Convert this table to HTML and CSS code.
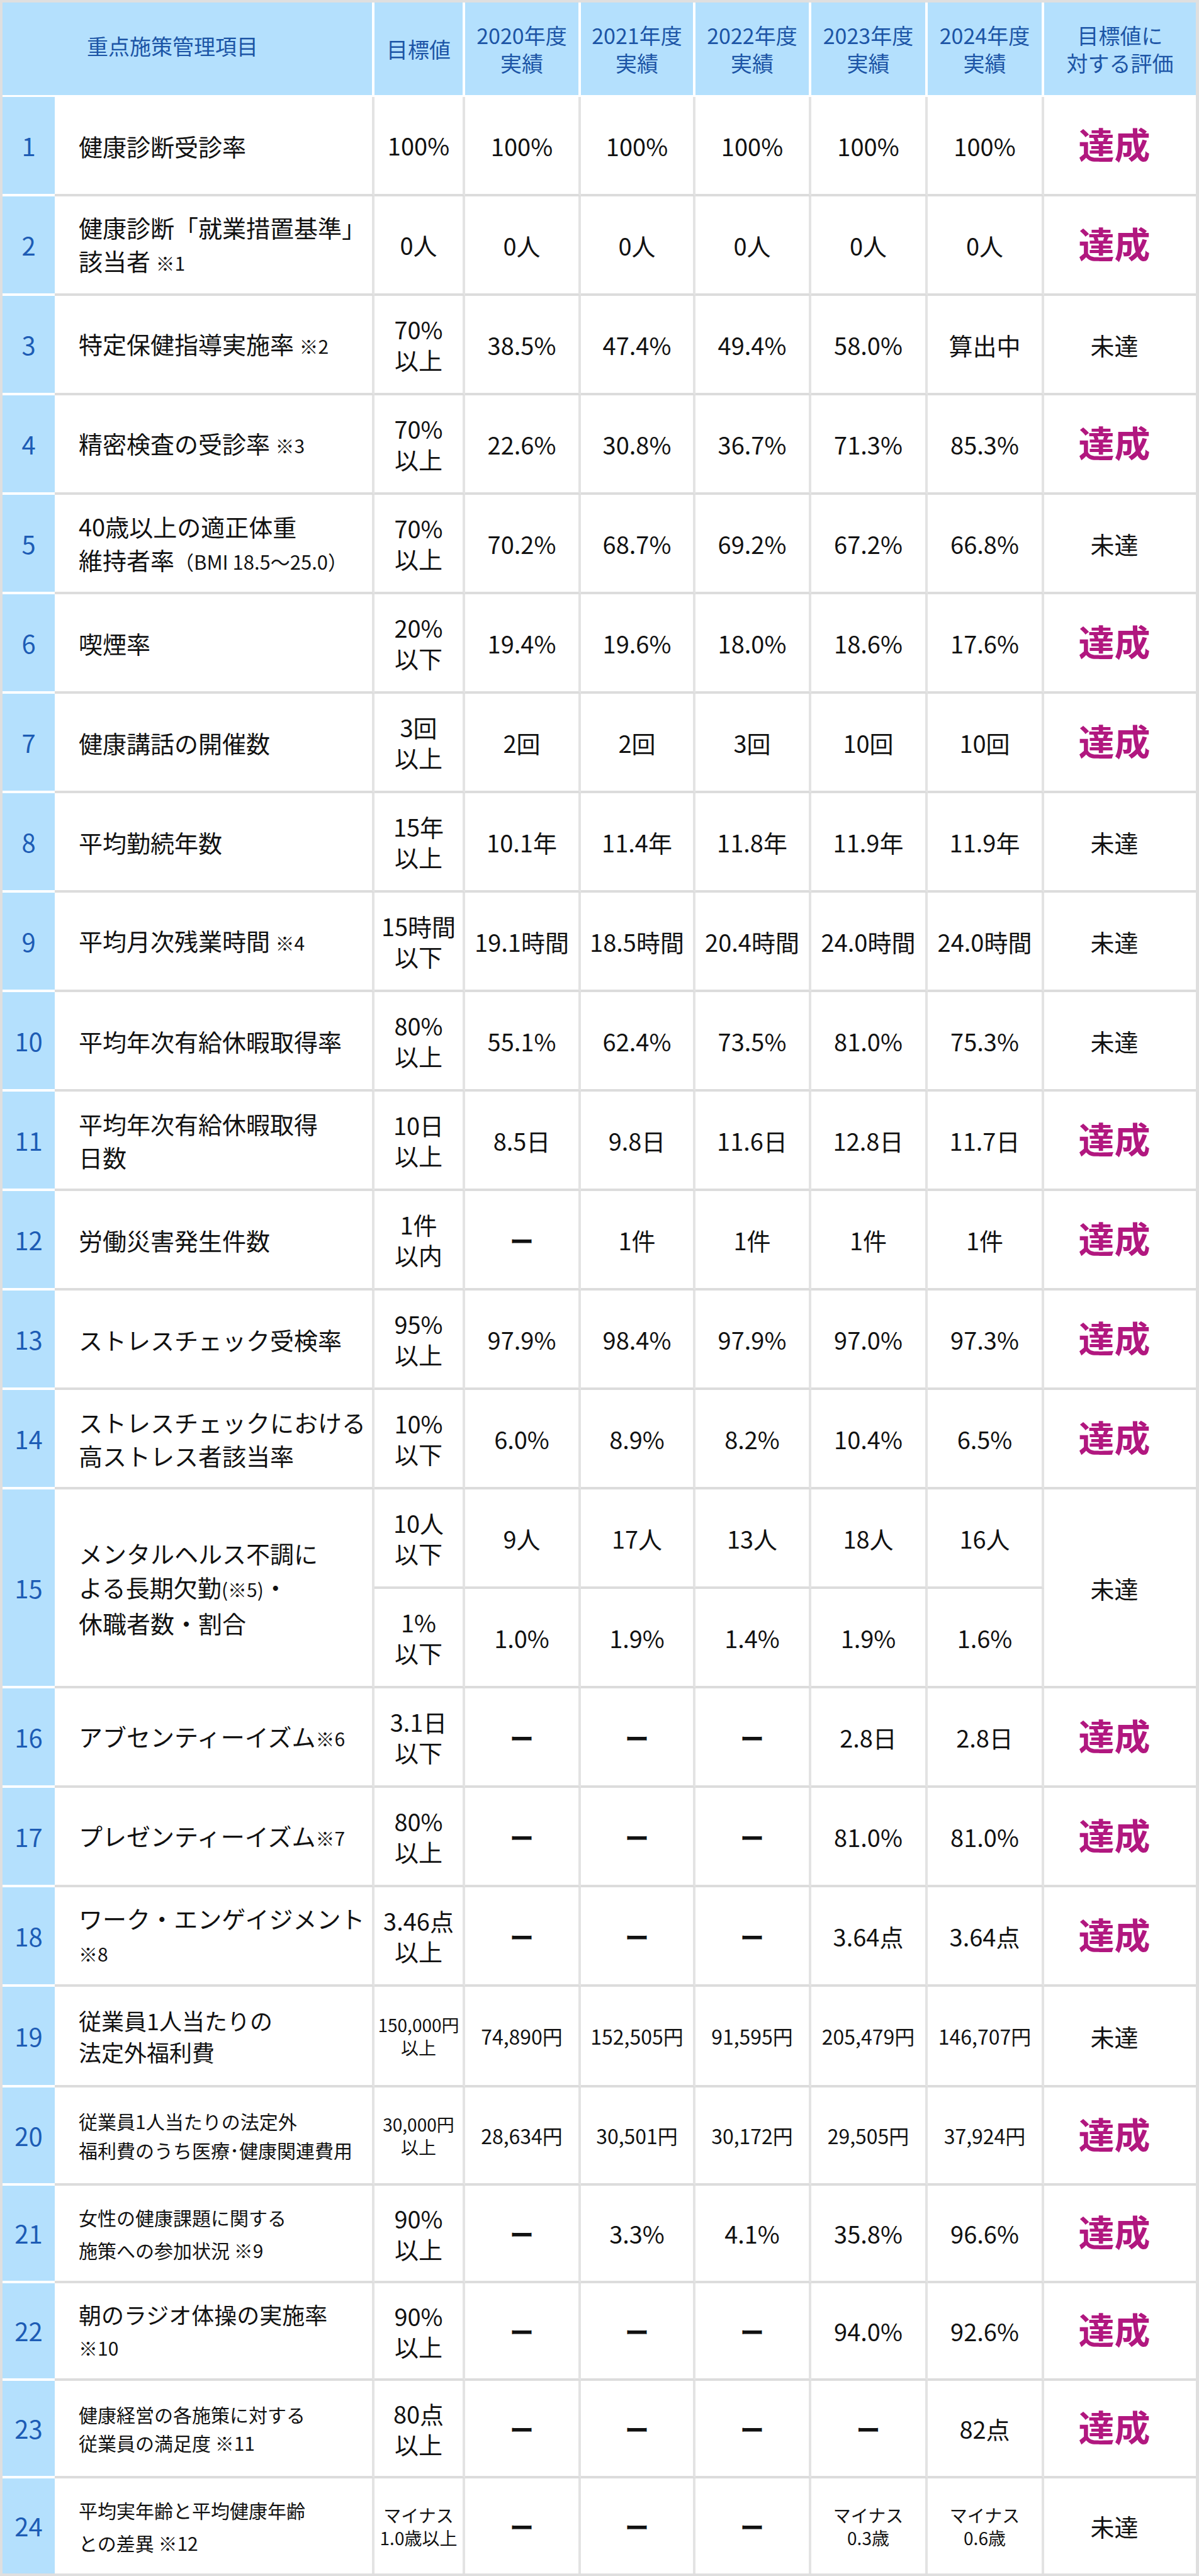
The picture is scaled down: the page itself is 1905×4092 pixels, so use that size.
FILE: index.html
```html
<!DOCTYPE html>
<html lang="ja">
<head>
<meta charset="utf-8">
<title>重点施策管理項目</title>
<link rel="stylesheet" href="styles.css">
</head>
<body>
<table class="kpi">
<colgroup>
<col class="c-no"><col class="c-item"><col class="c-tg"><col class="c-y"><col class="c-y2"><col class="c-y"><col class="c-y3"><col class="c-y3"><col class="c-ev">
</colgroup>
<thead>
<tr class="head">
<th colspan="2" class="h-item">重点施策管理項目</th>
<th>目標値</th>
<th>2020年度<br>実績</th>
<th>2021年度<br>実績</th>
<th>2022年度<br>実績</th>
<th>2023年度<br>実績</th>
<th>2024年度<br>実績</th>
<th>目標値に<br>対する評価</th>
</tr>
</thead>
<tbody>
<tr class="r"><td class="no">1</td><td class="item">健康診断受診率</td><td class="tg">100%</td><td class="v">100%</td><td class="v">100%</td><td class="v">100%</td><td class="v">100%</td><td class="v">100%</td><td class="ev"><span class="ok">達成</span></td></tr>
<tr class="r"><td class="no">2</td><td class="item">健康診断「就業措置基準」<br>該当者 <span class="note">※1</span></td><td class="tg">0人</td><td class="v">0人</td><td class="v">0人</td><td class="v">0人</td><td class="v">0人</td><td class="v">0人</td><td class="ev"><span class="ok">達成</span></td></tr>
<tr class="r"><td class="no">3</td><td class="item">特定保健指導実施率 <span class="note">※2</span></td><td class="tg">70%<br>以上</td><td class="v">38.5%</td><td class="v">47.4%</td><td class="v">49.4%</td><td class="v">58.0%</td><td class="v">算出中</td><td class="ev">未達</td></tr>
<tr class="r"><td class="no">4</td><td class="item">精密検査の受診率 <span class="note">※3</span></td><td class="tg">70%<br>以上</td><td class="v">22.6%</td><td class="v">30.8%</td><td class="v">36.7%</td><td class="v">71.3%</td><td class="v">85.3%</td><td class="ev"><span class="ok">達成</span></td></tr>
<tr class="r"><td class="no">5</td><td class="item">40歳以上の適正体重<br>維持者率<span class="note bmi">（BMI 18.5〜25.0）</span></td><td class="tg">70%<br>以上</td><td class="v">70.2%</td><td class="v">68.7%</td><td class="v">69.2%</td><td class="v">67.2%</td><td class="v">66.8%</td><td class="ev">未達</td></tr>
<tr class="r"><td class="no">6</td><td class="item">喫煙率</td><td class="tg">20%<br>以下</td><td class="v">19.4%</td><td class="v">19.6%</td><td class="v">18.0%</td><td class="v">18.6%</td><td class="v">17.6%</td><td class="ev"><span class="ok">達成</span></td></tr>
<tr class="r"><td class="no">7</td><td class="item">健康講話の開催数</td><td class="tg">3回<br>以上</td><td class="v">2回</td><td class="v">2回</td><td class="v">3回</td><td class="v">10回</td><td class="v">10回</td><td class="ev"><span class="ok">達成</span></td></tr>
<tr class="r"><td class="no">8</td><td class="item">平均勤続年数</td><td class="tg">15年<br>以上</td><td class="v">10.1年</td><td class="v">11.4年</td><td class="v">11.8年</td><td class="v">11.9年</td><td class="v">11.9年</td><td class="ev">未達</td></tr>
<tr class="r"><td class="no">9</td><td class="item">平均月次残業時間 <span class="note">※4</span></td><td class="tg">15時間<br>以下</td><td class="v">19.1時間</td><td class="v">18.5時間</td><td class="v">20.4時間</td><td class="v">24.0時間</td><td class="v">24.0時間</td><td class="ev">未達</td></tr>
<tr class="r"><td class="no">10</td><td class="item">平均年次有給休暇取得率</td><td class="tg">80%<br>以上</td><td class="v">55.1%</td><td class="v">62.4%</td><td class="v">73.5%</td><td class="v">81.0%</td><td class="v">75.3%</td><td class="ev">未達</td></tr>
<tr class="r"><td class="no">11</td><td class="item">平均年次有給休暇取得<br>日数</td><td class="tg">10日<br>以上</td><td class="v">8.5日</td><td class="v">9.8日</td><td class="v">11.6日</td><td class="v">12.8日</td><td class="v">11.7日</td><td class="ev"><span class="ok">達成</span></td></tr>
<tr class="r"><td class="no">12</td><td class="item">労働災害発生件数</td><td class="tg">1件<br>以内</td><td class="v"><span class="dash">ー</span></td><td class="v">1件</td><td class="v">1件</td><td class="v">1件</td><td class="v">1件</td><td class="ev"><span class="ok">達成</span></td></tr>
<tr class="r"><td class="no">13</td><td class="item">ストレスチェック受検率</td><td class="tg">95%<br>以上</td><td class="v">97.9%</td><td class="v">98.4%</td><td class="v">97.9%</td><td class="v">97.0%</td><td class="v">97.3%</td><td class="ev"><span class="ok">達成</span></td></tr>
<tr class="r"><td class="no">14</td><td class="item">ストレスチェックにおける<br>高ストレス者該当率</td><td class="tg">10%<br>以下</td><td class="v">6.0%</td><td class="v">8.9%</td><td class="v">8.2%</td><td class="v">10.4%</td><td class="v">6.5%</td><td class="ev"><span class="ok">達成</span></td></tr>
<tr class="r"><td class="no" rowspan="2">15</td><td class="item lh54" rowspan="2">メンタルヘルス不調に<br>よる長期欠勤<span class="note">(※5)</span>・<br>休職者数・割合</td><td class="tg">10人<br>以下</td><td class="v">9人</td><td class="v">17人</td><td class="v">13人</td><td class="v">18人</td><td class="v">16人</td><td class="ev" rowspan="2">未達</td></tr>
<tr class="r"><td class="tg">1%<br>以下</td><td class="v">1.0%</td><td class="v">1.9%</td><td class="v">1.4%</td><td class="v">1.9%</td><td class="v">1.6%</td></tr>
<tr class="r"><td class="no">16</td><td class="item">アブセンティーイズム<span class="note">※6</span></td><td class="tg">3.1日<br>以下</td><td class="v"><span class="dash">ー</span></td><td class="v"><span class="dash">ー</span></td><td class="v"><span class="dash">ー</span></td><td class="v">2.8日</td><td class="v">2.8日</td><td class="ev"><span class="ok">達成</span></td></tr>
<tr class="r"><td class="no">17</td><td class="item">プレゼンティーイズム<span class="note">※7</span></td><td class="tg">80%<br>以上</td><td class="v"><span class="dash">ー</span></td><td class="v"><span class="dash">ー</span></td><td class="v"><span class="dash">ー</span></td><td class="v">81.0%</td><td class="v">81.0%</td><td class="ev"><span class="ok">達成</span></td></tr>
<tr class="r"><td class="no">18</td><td class="item">ワーク・エンゲイジメント<br><span class="note">※8</span></td><td class="tg">3.46点<br>以上</td><td class="v"><span class="dash">ー</span></td><td class="v"><span class="dash">ー</span></td><td class="v"><span class="dash">ー</span></td><td class="v">3.64点</td><td class="v">3.64点</td><td class="ev"><span class="ok">達成</span></td></tr>
<tr class="r r19"><td class="no">19</td><td class="item it36">従業員1人当たりの<br>法定外福利費</td><td class="tg sm">150,000円<br>以上</td><td class="v md">74,890円</td><td class="v md">152,505円</td><td class="v md">91,595円</td><td class="v md">205,479円</td><td class="v md">146,707円</td><td class="ev">未達</td></tr>
<tr class="r r20"><td class="no">20</td><td class="item it30 lh46">従業員1人当たりの法定外<br>福利費のうち医療･健康関連費用</td><td class="tg sm">30,000円<br>以上</td><td class="v md">28,634円</td><td class="v md">30,501円</td><td class="v md">30,172円</td><td class="v md">29,505円</td><td class="v md">37,924円</td><td class="ev"><span class="ok">達成</span></td></tr>
<tr class="r r21"><td class="no">21</td><td class="item it30 lh52">女性の健康課題に関する<br>施策への参加状況 ※9</td><td class="tg">90%<br>以上</td><td class="v"><span class="dash">ー</span></td><td class="v">3.3%</td><td class="v">4.1%</td><td class="v">35.8%</td><td class="v">96.6%</td><td class="ev"><span class="ok">達成</span></td></tr>
<tr class="r r21"><td class="no">22</td><td class="item it36">朝のラジオ体操の実施率<br><span class="note">※10</span></td><td class="tg">90%<br>以上</td><td class="v"><span class="dash">ー</span></td><td class="v"><span class="dash">ー</span></td><td class="v"><span class="dash">ー</span></td><td class="v">94.0%</td><td class="v">92.6%</td><td class="ev"><span class="ok">達成</span></td></tr>
<tr class="r r21"><td class="no">23</td><td class="item it30 lh45">健康経営の各施策に対する<br>従業員の満足度 ※11</td><td class="tg">80点<br>以上</td><td class="v"><span class="dash">ー</span></td><td class="v"><span class="dash">ー</span></td><td class="v"><span class="dash">ー</span></td><td class="v"><span class="dash">ー</span></td><td class="v">82点</td><td class="ev"><span class="ok">達成</span></td></tr>
<tr class="r r24"><td class="no">24</td><td class="item it30 lh52">平均実年齢と平均健康年齢<br>との差異 ※12</td><td class="tg sm">マイナス<br>1.0歳以上</td><td class="v"><span class="dash">ー</span></td><td class="v"><span class="dash">ー</span></td><td class="v"><span class="dash">ー</span></td><td class="v sm">マイナス<br>0.3歳</td><td class="v sm">マイナス<br>0.6歳</td><td class="ev">未達</td></tr>
</tbody>
</table>
</body>
</html>
```

FILE: styles.css
```css
html, body {
  margin: 0;
  padding: 0;
  background: #ffffff;
}

body {
  font-family: "Noto Sans CJK JP", "Noto Sans", sans-serif;
  color: #111111;
}

.kpi {
  border-collapse: separate;
  border-spacing: 0;
  table-layout: fixed;
  width: 1905px;
  border: 4px solid #dfdfdf;
  border-right-width: 5px;
}

.c-no { width: 83px; }
.c-item { width: 508px; }
.c-tg { width: 144px; }
.c-y { width: 184px; }
.c-y2 { width: 182px; }
.c-y3 { width: 185px; }
.c-ev { width: 241px; }

.kpi th {
  background: #b4e0fd;
  color: #1c55a6;
  font-size: 34px;
  font-weight: 400;
  line-height: 44px;
  text-align: center;
  vertical-align: middle;
  padding: 0;
  border-right: 4px solid #ffffff;
  border-bottom: 3px solid #ffffff;
}

.kpi th:last-child {
  border-right: 0;
}

.kpi th.h-item {
  text-align: left;
  padding-left: 134px;
  padding-bottom: 10px;
}

.head { height: 150px; }
.r { height: 158px; }
.r19 { height: 160px; }
.r20 { height: 156px; }
.r21 { height: 155px; }
.r24 { height: 151px; }

.kpi td {
  font-size: 38px;
  line-height: 53px;
  text-align: center;
  vertical-align: middle;
  padding: 0;
  white-space: nowrap;
  border-right: 4px solid #e3e3e3;
  border-bottom: 4px solid #dcdcdc;
}

.kpi tbody tr:last-child td {
  border-bottom: 0;
}

.kpi td.no {
  background: #b4e0fd;
  color: #1d5cb5;
  font-size: 40px;
  border-right: 0;
  border-bottom-color: #ffffff;
}

.kpi td.item {
  text-align: left;
  padding-left: 38px;
}

.kpi td.tg {
  line-height: 48px;
}

.kpi td.ev {
  border-right: 0;
  padding-right: 18px;
}

.note {
  font-size: 30px;
}

.note.bmi {
  font-size: 31px;
}

.ok {
  color: #b1177f;
  font-size: 57px;
  font-weight: 700;
}

.dash {
  font-weight: 700;
}

.kpi td.it36 {
  font-size: 36px;
  line-height: 50px;
}

.kpi td.it30 {
  font-size: 30px;
  line-height: 46px;
}

.kpi td.lh54 { line-height: 54px; }
.kpi td.lh52 { line-height: 52px; }
.kpi td.lh46 { line-height: 46px; }
.kpi td.lh45 { line-height: 45px; }

.kpi td.sm {
  font-size: 28px;
  line-height: 36px;
}

.kpi td.md {
  font-size: 32px;
}
```
